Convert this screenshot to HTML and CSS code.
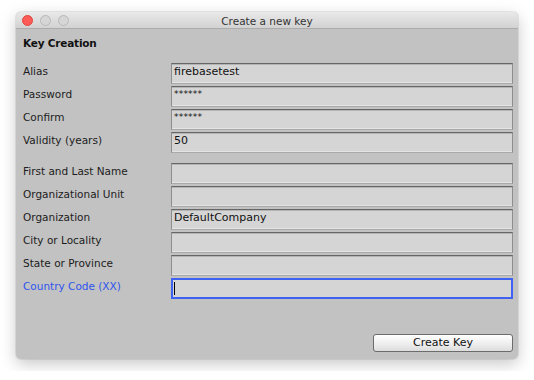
FILE: index.html
```html
<!DOCTYPE html>
<html>
<head>
<meta charset="utf-8">
<link rel="stylesheet" href="styles.css">
</head>
<body>
<div class="window">
  <div class="titlebar">
    <div class="lights">
      <span class="light red"></span>
      <span class="light gray"></span>
      <span class="light gray"></span>
    </div>
    <div class="title">Create a new key</div>
  </div>
  <div class="content">
    <div class="heading">Key Creation</div>
    <div class="form">
      <div class="label">Alias</div><div class="field">firebasetest</div>
      <div class="label">Password</div><div class="field pw">******</div>
      <div class="label">Confirm</div><div class="field pw">******</div>
      <div class="label">Validity (years)</div><div class="field">50</div>
    </div>
    <div class="form second">
      <div class="label">First and Last Name</div><div class="field"></div>
      <div class="label">Organizational Unit</div><div class="field"></div>
      <div class="label">Organization</div><div class="field">DefaultCompany</div>
      <div class="label">City or Locality</div><div class="field"></div>
      <div class="label">State or Province</div><div class="field"></div>
      <div class="label focus-label">Country Code (XX)</div><div class="field focused"><span class="caret"></span></div>
    </div>
    <div class="actions">
      <div class="button">Create Key</div>
    </div>
  </div>
</div>
</body>
</html>
```
FILE: styles.css
```css
html, body {
  margin: 0;
  padding: 0;
  background: #ffffff;
}
body {
  padding: 12px 16px;
  font-family: "DejaVu Sans", "Liberation Sans", sans-serif;
  font-size: 11px;
  color: #1c1c1c;
}
.window {
  width: 502px;
  height: 347px;
  border-radius: 5px;
  overflow: hidden;
  background: #c2c2c2;
  box-shadow: 0 5px 16px rgba(0,0,0,0.22), 0 0 0 1px rgba(0,0,0,0.07);
  display: flex;
  flex-direction: column;
}
.titlebar {
  height: 16px;
  position: relative;
  background: linear-gradient(#e9e9e9, #d2d2d2);
  border-bottom: 1px solid #acacac;
  display: flex;
  align-items: center;
  justify-content: center;
}
.lights {
  position: absolute;
  left: 6px;
  top: 3px;
  display: flex;
  gap: 7px;
}
.light {
  width: 11px;
  height: 11px;
  border-radius: 50%;
  box-sizing: border-box;
}
.light.red {
  background: #fc5b57;
  border: 1px solid #e0443e;
}
.light.gray {
  background: #d6d6d6;
  border: 1px solid #b8b8b8;
}
.title {
  font-size: 10.5px;
  color: #333;
  line-height: 16px;
  padding-top: 1px;
}
.content {
  padding: 6px 5px 0 7px;
  display: flex;
  flex-direction: column;
}
.heading {
  font-weight: bold;
  font-size: 10.5px;
  letter-spacing: -0.2px;
  line-height: 16px;
  margin-bottom: 12px;
  color: #111;
}
.form {
  display: grid;
  grid-template-columns: 148px 342px;
  grid-auto-rows: 21px;
  row-gap: 2px;
}
.form.second {
  margin-top: 10px;
}
.label {
  font-size: 10.5px;
  line-height: 16px;
  color: #1c1c1c;
}
.focus-label {
  color: #2f54ee;
}
.field {
  box-sizing: border-box;
  background: #d5d5d5;
  border: 1px solid #8e8e8e;
  border-top-color: #666;
  border-bottom-color: #a9a9a9;
  box-shadow: inset 0 1px 0 #b4b4b4, inset 0 -1px 0 #e4e4e4;
  padding: 0 2px;
  line-height: 15px;
  color: #111;
}
.field.pw {
  font-size: 9px;
  line-height: 9px;
  padding-top: 3px;
  letter-spacing: 0.2px;
}
.field.focused {
  border: 2px solid #3f62f2;
  box-shadow: none;
  padding: 1px 1px 0 1px;
}
.caret {
  display: block;
  width: 1px;
  height: 13px;
  background: #000;
  margin-top: 1px;
}
.actions {
  display: flex;
  justify-content: flex-end;
  margin-top: 35px;
}
.button {
  box-sizing: border-box;
  width: 140px;
  height: 18px;
  border: 1px solid #6c6c6c;
  border-radius: 3px;
  background: linear-gradient(#ffffff, #ececec 60%, #dcdcdc);
  text-align: center;
  line-height: 16px;
  color: #111;
}
```
